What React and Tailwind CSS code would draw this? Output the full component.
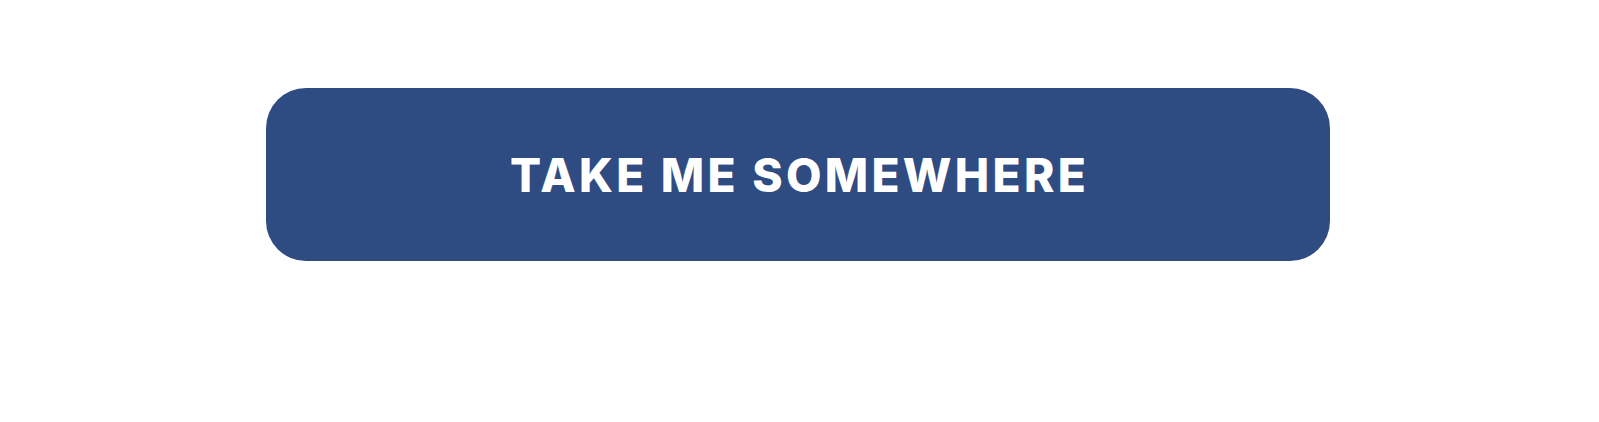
export default function App() {
  return (
    <div className="w-full h-[422px] bg-white pt-[88px] pl-[266px]">
      <button
        type="button"
        className="flex h-[173px] w-[1064px] items-center justify-center rounded-[40px] bg-[#2e4b82] text-white"
      >
        <span className="font-['Inter',sans-serif] text-[46px] font-extrabold leading-none tracking-[3.3px] pl-[3px]">
          TAKE ME SOMEWHERE
        </span>
      </button>
    </div>
  );
}
